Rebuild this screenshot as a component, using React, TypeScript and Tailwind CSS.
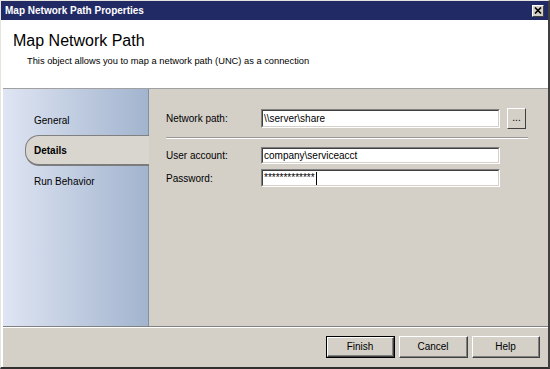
import React from "react";

const font = { fontFamily: '"Liberation Sans", Arial, sans-serif' };

function Field({ value, caret }: { value: string; caret?: boolean }) {
  return (
    <div className="flex h-full w-[239px] items-center border-t border-l border-t-[#808080] border-l-[#808080] border-b border-r border-b-white border-r-white bg-white">
      <div className="flex h-full w-full items-center border-t border-l border-t-[#404040] border-l-[#404040] border-b border-r border-b-[#d4d0c8] border-r-[#d4d0c8] pl-[1px] text-[10px] text-black">
        <span className="leading-[12px]">{value}</span>
        {caret && <span className="ml-[1px] h-[13px] w-px bg-black" />}
      </div>
    </div>
  );
}

function Btn({ label, primary }: { label: string; primary?: boolean }) {
  return (
    <div
      className={
        "flex h-[22px] items-center justify-center text-[10px] text-black " +
        (primary ? "border border-black" : "")
      }
    >
      <div className="flex h-full w-full items-center justify-center border-t border-l border-t-white border-l-white border-b border-r border-b-[#404040] border-r-[#404040] bg-[#d4d0c8]">
        <div className="flex h-full w-full items-center justify-center border-b border-r border-b-[#808080] border-r-[#808080]">
          {label}
        </div>
      </div>
    </div>
  );
}

export default function App() {
  return (
    <div className="h-[369px] w-[550px] overflow-hidden bg-[#d4d0c8]" style={font}>
      <div className="flex h-full w-full flex-col border-t border-l border-t-[#e6e4df] border-l-[#e6e4df] border-b-2 border-r-2 border-b-[#303030] border-r-[#404040]">
        {/* title bar */}
        <div className="flex h-[19px] items-center justify-between bg-[#222a66] pl-[4px] pr-[4px]">
          <span className="text-[10px] font-bold text-white">Map Network Path Properties</span>
          <div className="flex h-[12px] w-[12px] items-center justify-center border-t border-l border-t-white border-l-white border-b border-r border-b-[#404040] border-r-[#404040] bg-[#d4d0c8]">
            <svg width="8" height="7" viewBox="0 0 8 7">
              <path d="M1 0.5 L7 6.5 M7 0.5 L1 6.5" stroke="#000" strokeWidth="1.6" />
            </svg>
          </div>
        </div>

        <div className="flex flex-1 flex-col border-l-2 border-l-white">
          {/* header */}
          <div className="h-[69px] border-b border-b-[#a0a0a0] bg-white">
            <div className="pl-[10px] pt-[11px] text-[16px] leading-[20px] text-black">Map Network Path</div>
            <div className="pl-[24px] pt-[4px] text-[9.3px] leading-[12px] text-black">
              This object allows you to map a network path (UNC) as a connection
            </div>
          </div>

          {/* middle */}
          <div className="flex h-[237px]">
            <div className="flex w-[146px] flex-col border-r border-r-[#8090a8] bg-gradient-to-r from-[#dfe5f3] to-[#a2b4ce] pt-[16px] text-[10px] text-black">
              <div className="flex h-[30px] items-center pl-[31px]">General</div>
              <div className="-mr-px ml-[22px] flex h-[31px] items-center rounded-l-[14px] border-t border-l border-b-2 border-t-[#808080] border-l-[#808080] border-b-[#7c7c7c] bg-[#d9d6d0] pl-[8px] font-bold">
                Details
              </div>
              <div className="flex h-[30px] items-center pl-[31px]">Run Behavior</div>
            </div>

            <div className="flex flex-1 flex-col pl-[17px] pr-[20px] pt-[19px] text-[10px] text-black">
              <div className="flex h-[21px] items-center">
                <span className="w-[95px]">Network path:</span>
                <div className="h-[19px]">
                  <Field value={"\\\\server\\share"} />
                </div>
                <div className="ml-[7px] flex h-[21px] w-[19px] items-center justify-center border-t border-l border-t-white border-l-white border-b border-r border-b-[#404040] border-r-[#404040] pb-[3px] text-[10px]">
                  ...
                </div>
              </div>
              <div className="mt-[8px] h-[2px] border-t border-t-[#9a9894] border-b border-b-white" />
              <div className="mt-[8px] flex h-[17px] items-center">
                <span className="w-[95px]">User account:</span>
                <div className="h-[17px]">
                  <Field value={"company\\serviceacct"} />
                </div>
              </div>
              <div className="mt-[5px] flex h-[18px] items-center">
                <span className="w-[95px]">Password:</span>
                <div className="h-[18px]">
                  <Field value="*************" caret />
                </div>
              </div>
            </div>
          </div>

          {/* footer */}
          <div className="flex flex-1 flex-col border-t border-t-[#808080]">
            <div className="h-px bg-white" />
            <div className="flex justify-end gap-[4px] pr-[8px] pt-[8px]">
              <div className="w-[69px]">
                <Btn label="Finish" primary />
              </div>
              <div className="w-[69px]">
                <Btn label="Cancel" />
              </div>
              <div className="w-[68px]">
                <Btn label="Help" />
              </div>
            </div>
          </div>
        </div>
      </div>
    </div>
  );
}
